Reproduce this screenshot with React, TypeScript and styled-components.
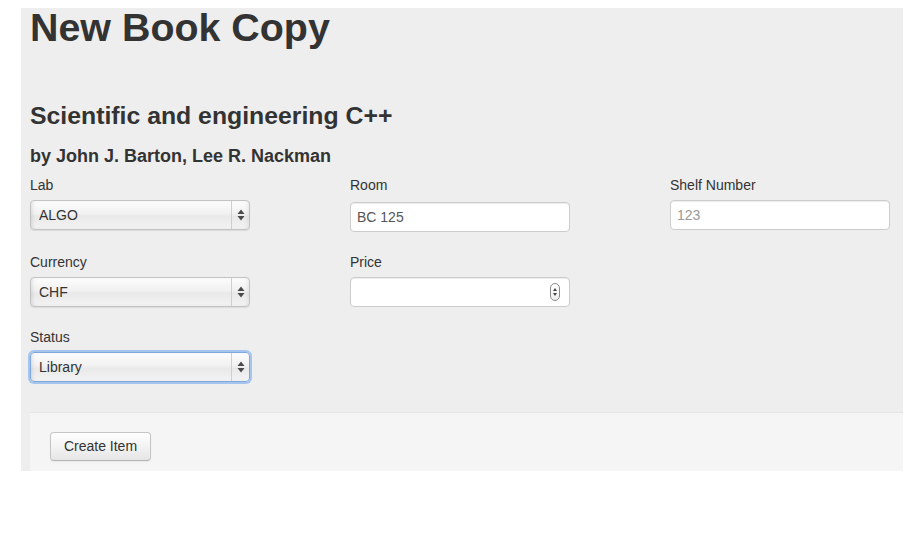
import React from "react";
import styled, { createGlobalStyle, css } from "styled-components";

const Global = createGlobalStyle`
  body {
    margin: 8px;
    background: #ffffff;
    font-family: "Liberation Sans", Arial, Helvetica, sans-serif;
    font-size: 14px;
    line-height: 20px;
    color: #333333;
  }
  * { box-sizing: border-box; }
`;

const Panel = styled.div`
  margin-left: 13px;
  width: 882px;
  background: #eeeeee;
  padding-left: 9px;
`;

const Title = styled.h1`
  margin: 0;
  font-size: 39.4px;
  line-height: 38px;
  font-weight: bold;
  color: #333333;
`;

const BookTitle = styled.h3`
  margin: 50px 0 0;
  font-size: 24.8px;
  line-height: 40px;
  font-weight: bold;
`;

const Authors = styled.h4`
  margin: 10px 0 9px;
  font-size: 18px;
  line-height: 20px;
  font-weight: bold;
`;

const FormGrid = styled.div`
  display: grid;
  grid-template-columns: repeat(3, 220px);
  column-gap: 100px;
  row-gap: 20px;
  align-items: start;
`;

const Field = styled.div`
  display: flex;
  flex-direction: column;
`;

const Label = styled.label<{ $offset?: number }>`
  font-size: 14px;
  line-height: 20px;
  margin-bottom: ${(p) => 5 + (p.$offset ?? 0)}px;
  color: #333;
`;

const SelectBox = styled.div<{ $focused?: boolean }>`
  position: relative;
  display: flex;
  align-items: center;
  height: 30px;
  width: 220px;
  border: 1px solid #c3c3c3;
  border-radius: 4px;
  background: linear-gradient(to bottom, #fdfdfd 0%, #f1f1f1 45%, #e9e9e9 55%, #f3f3f3 100%);
  box-shadow: inset 3px 0 4px -2px rgba(0, 0, 0, 0.12), inset -3px 0 4px -2px rgba(0, 0, 0, 0.08),
    0 1px 1px rgba(0, 0, 0, 0.08);
  ${(p) =>
    p.$focused &&
    css`
      border-color: #7ea8de;
      box-shadow: 0 0 0 2px #a5c4ee, inset 3px 0 4px -2px rgba(0, 0, 0, 0.12);
    `}
`;

const SelectValue = styled.span`
  flex: 1;
  padding-left: 8px;
  font-size: 14px;
  color: #333;
`;

const ArrowZone = styled.span`
  display: flex;
  align-items: center;
  justify-content: center;
  width: 18px;
  height: 100%;
  border-left: 1px solid #cfcfcf;
`;

const TextInput = styled.div<{ $placeholder?: boolean }>`
  display: flex;
  align-items: center;
  height: 30px;
  width: 220px;
  padding: 4px 6px;
  border: 1px solid #cccccc;
  border-radius: 4px;
  background: #ffffff;
  box-shadow: inset 0 1px 1px rgba(0, 0, 0, 0.075);
  font-size: 14px;
  color: ${(p) => (p.$placeholder ? "#999999" : "#555555")};
`;

const Spinner = styled.span`
  margin-left: auto;
  margin-right: 3px;
  width: 10px;
  height: 18px;
  border: 1px solid #8a8a8a;
  border-radius: 5px;
  display: flex;
  align-items: center;
  justify-content: center;
  background: linear-gradient(to bottom, #ffffff, #eeeeee);
`;

const FormActions = styled.div`
  margin-top: 30px;
  padding: 19px 20px 10px;
  background: #f5f5f5;
  border-top: 1px solid #e5e5e5;
`;

const Button = styled.button`
  font-family: "Liberation Sans", Arial, Helvetica, sans-serif;
  font-size: 14px;
  line-height: 19px;
  padding: 4px 12px;
  width: 101px;
  color: #333;
  border: 1px solid #c5c5c5;
  border-bottom-color: #b3b3b3;
  border-radius: 4px;
  background: linear-gradient(to bottom, #ffffff, #e6e6e6);
  box-shadow: inset 0 1px 0 rgba(255, 255, 255, 0.2), 0 1px 2px rgba(0, 0, 0, 0.05);
`;

const UpDown = () => (
  <svg width="8" height="12" viewBox="0 0 8 12">
    <path d="M4 0.5 L7.5 5 L0.5 5 Z" fill="#4a4a4a" />
    <path d="M4 11.5 L7.5 7 L0.5 7 Z" fill="#4a4a4a" />
  </svg>
);

const SmallUpDown = () => (
  <svg width="6" height="12" viewBox="0 0 6 12">
    <path d="M3 2 L5 5 L1 5 Z" fill="#444" />
    <path d="M3 10 L5 7 L1 7 Z" fill="#444" />
  </svg>
);

const Select = ({ value, focused }: { value: string; focused?: boolean }) => (
  <SelectBox $focused={focused}>
    <SelectValue>{value}</SelectValue>
    <ArrowZone>
      <UpDown />
    </ArrowZone>
  </SelectBox>
);

export default function App() {
  return (
    <>
      <Global />
      <Panel>
        <Title>New Book Copy</Title>
        <BookTitle>Scientific and engineering C++</BookTitle>
        <Authors>by John J. Barton, Lee R. Nackman</Authors>
        <FormGrid>
          <Field>
            <Label>Lab</Label>
            <Select value="ALGO" />
          </Field>
          <Field>
            <Label $offset={2}>Room</Label>
            <TextInput>BC 125</TextInput>
          </Field>
          <Field>
            <Label>Shelf Number</Label>
            <TextInput $placeholder>123</TextInput>
          </Field>
          <Field>
            <Label>Currency</Label>
            <Select value="CHF" />
          </Field>
          <Field>
            <Label>Price</Label>
            <TextInput>
              <Spinner>
                <SmallUpDown />
              </Spinner>
            </TextInput>
          </Field>
          <div />
          <Field>
            <Label>Status</Label>
            <Select value="Library" focused />
          </Field>
        </FormGrid>
        <FormActions>
          <Button>Create Item</Button>
        </FormActions>
      </Panel>
    </>
  );
}
